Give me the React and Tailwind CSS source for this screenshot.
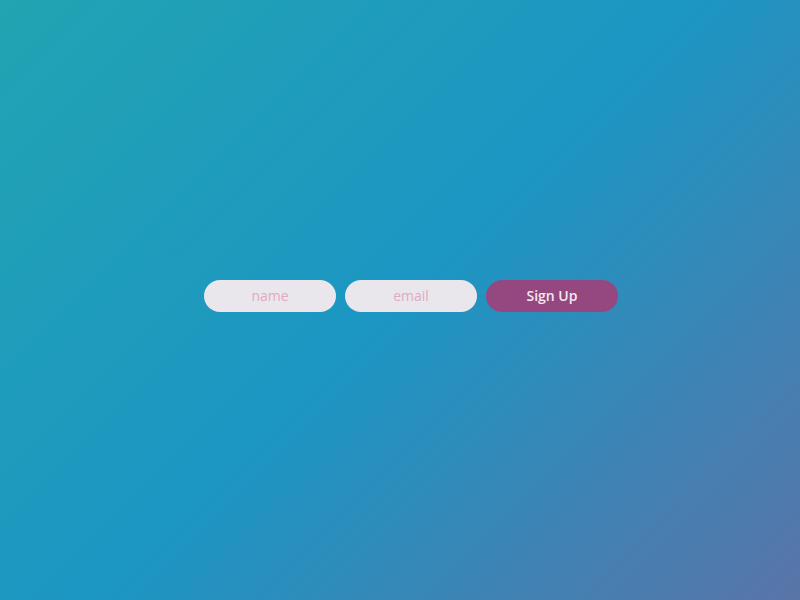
import React, { useState } from 'react';

export default function App() {
  const [form, setForm] = useState({ name: '', email: '' });

  const handleChange = (e) => setForm({ ...form, [e.target.name]: e.target.value });

  const field = 'w-[132px] h-8 rounded-full bg-[#e9e7eb] text-center text-[14px] font-medium text-[#9a4a7e] placeholder-[#e2a9c6] outline-none';

  return (
    <div
      className="min-h-screen w-full flex items-center justify-center pl-[22px] pb-[9px] bg-[linear-gradient(135deg,#22a4b2_0%,#1c96c3_50%,#5a74a8_100%)]"
      style={{ fontFamily: '"Open Sans", "Liberation Sans", sans-serif' }}
    >
      <form className="flex gap-[9px]" onSubmit={(e) => e.preventDefault()}>
        <input type="text" name="name" value={form.name} onChange={handleChange} placeholder="name" className={field} />
        <input type="email" name="email" value={form.email} onChange={handleChange} placeholder="email" className={field} />
        <button type="submit" className="w-[132px] h-8 rounded-full bg-[#95487f] text-[14px] font-semibold text-[#f3e9f1]">
          Sign Up
        </button>
      </form>
    </div>
  );
}
